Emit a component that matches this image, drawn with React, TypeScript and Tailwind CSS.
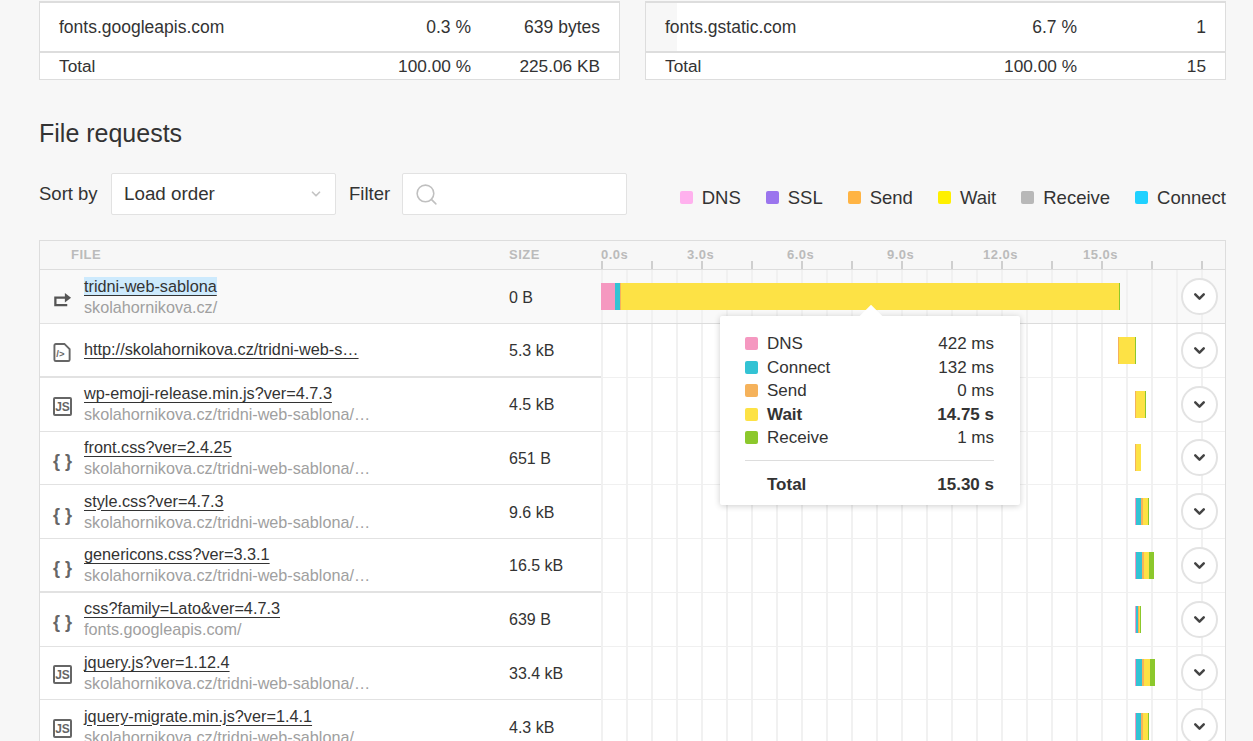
import { ChevronDown, Search } from 'lucide-react';

const colors = {
    dns: 'bg-[#f598c0]',
    connect: 'bg-[#33c3d4]',
    send: 'bg-[#f5b25b]',
    wait: 'bg-[#fde245]',
    receive: 'bg-[#8cc82c]',
};

type Kind = keyof typeof colors;

interface Request {
    icon: 'redirect' | 'html' | 'js' | 'css';
    name: string;
    host?: string;
    size: string;
    start: number;
    segments: [Kind, number][];
}

const site = 'skolahornikova.cz/tridni-web-sablona/…';

const requests: Request[] = [
    { icon: 'redirect', name: 'tridni-web-sablona', host: 'skolahornikova.cz/', size: '0 B', start: 0, segments: [['dns', 14], ['connect', 5], ['send', 1], ['wait', 498], ['receive', 1]] },
    { icon: 'html', name: 'http://skolahornikova.cz/tridni-web-s…', size: '5.3 kB', start: 517, segments: [['send', 1], ['wait', 16], ['receive', 1]] },
    { icon: 'js', name: 'wp-emoji-release.min.js?ver=4.7.3', host: site, size: '4.5 kB', start: 534, segments: [['send', 1], ['wait', 9], ['receive', 1]] },
    { icon: 'css', name: 'front.css?ver=2.4.25', host: site, size: '651 B', start: 534, segments: [['send', 1], ['wait', 5]] },
    { icon: 'css', name: 'style.css?ver=4.7.3', host: site, size: '9.6 kB', start: 534, segments: [['dns', 1], ['connect', 5], ['send', 2], ['wait', 5], ['receive', 1]] },
    { icon: 'css', name: 'genericons.css?ver=3.3.1', host: site, size: '16.5 kB', start: 534, segments: [['dns', 1], ['connect', 6], ['send', 2], ['wait', 5], ['receive', 5]] },
    { icon: 'css', name: 'css?family=Lato&ver=4.7.3', host: 'fonts.googleapis.com/', size: '639 B', start: 534, segments: [['dns', 1], ['connect', 2], ['send', 1], ['wait', 1], ['receive', 1]] },
    { icon: 'js', name: 'jquery.js?ver=1.12.4', host: site, size: '33.4 kB', start: 534, segments: [['dns', 1], ['connect', 6], ['send', 2], ['wait', 6], ['receive', 5]] },
    { icon: 'js', name: 'jquery-migrate.min.js?ver=1.4.1', host: site, size: '4.3 kB', start: 534, segments: [['dns', 1], ['connect', 5], ['send', 2], ['wait', 5], ['receive', 1]] },
];

const legend = [
    { label: 'DNS', color: 'bg-[#ffb1ee]' },
    { label: 'SSL', color: 'bg-[#9b75ee]' },
    { label: 'Send', color: 'bg-[#ffb444]' },
    { label: 'Wait', color: 'bg-[#fff000]' },
    { label: 'Receive', color: 'bg-[#b8b8b8]' },
    { label: 'Connect', color: 'bg-[#1fd1ff]' },
];

const timings: { label: string; value: string; kind: Kind; bold?: boolean }[] = [
    { label: 'DNS', value: '422 ms', kind: 'dns' },
    { label: 'Connect', value: '132 ms', kind: 'connect' },
    { label: 'Send', value: '0 ms', kind: 'send' },
    { label: 'Wait', value: '14.75 s', kind: 'wait', bold: true },
    { label: 'Receive', value: '1 ms', kind: 'receive' },
];

function FileIcon({ icon }: { icon: Request['icon'] }) {
    if (icon === 'redirect') {
        return (
            <svg width="20" height="16" viewBox="0 0 20 16" fill="none" stroke="#555" strokeWidth="2.4">
                <path d="M14 5.500H2.500v8H15" />
                <path d="M12.500 0.500l6.500 5-6.500 5z" fill="#555" stroke="none" />
            </svg>
        );
    }
    if (icon === 'html') {
        return (
            <svg width="20" height="21" viewBox="0 0 20 21" fill="none">
                <path d="M3 1.500h9l5.500 5.500v11a1.500 1.500 0 0 1-1.500 1.500H3A1.500 1.500 0 0 1 1.500 18V3A1.500 1.500 0 0 1 3 1.500z" stroke="#666" strokeWidth="2" />
                <text x="3.500" y="15" fontSize="10" fontWeight="700" fill="#666" fontFamily="'Liberation Sans', sans-serif">/&gt;</text>
            </svg>
        );
    }
    if (icon === 'js') {
        return (
            <div className="flex h-[19px] w-[19px] -translate-y-px items-end justify-center rounded-[2px] border-2 border-[#666] text-[12px] leading-[14px] font-bold text-[#666]">
                JS
            </div>
        );
    }
    return <span className="text-[18px] leading-[20px] font-bold whitespace-nowrap text-[#666]">{'{ }'}</span>;
}

function TotalsTable({ host, share, value, total, fill }: { host: string; share: string; value: string; total: string; fill: number }) {
    return (
        <div className="w-[581px] border-x border-b border-[#ddd] bg-white">
            <div className="relative flex h-[52px] items-center border-y-2 border-[#ddd] px-[19px] text-[17.500px]">
                <div className="absolute inset-y-0 left-0 bg-[#f7f7f7]" style={{ width: fill }} />
                <span className="relative flex-1">{host}</span>
                <span className="relative w-[120px] text-right">{share}</span>
                <span className="relative w-[129px] text-right">{value}</span>
            </div>
            <div className="flex h-[26px] items-center px-[19px] pt-px text-[17.250px]">
                <span className="flex-1">Total</span>
                <span className="w-[120px] text-right">100.00 %</span>
                <span className="w-[129px] text-right">{total}</span>
            </div>
        </div>
    );
}

function Row({ request, index }: { request: Request; index: number }) {
    const first = index === 0;
    const thick = index === 1 || index === 5;
    const width = request.segments.reduce((sum, s) => sum + s[1], 0);

    return (
        <div className={`flex h-[53.750px] ${first ? 'bg-[#f9f9f9]' : 'bg-white'}`}>
            <div className={`flex w-[561px] shrink-0 items-center border-[#e2e2e2] pr-4 pl-[13px] ${thick ? 'border-b-2' : 'border-b'}`}>
                <div className="flex w-[31px] shrink-0 translate-y-[3px] justify-center pr-3">
                    <FileIcon icon={request.icon} />
                </div>
                <div className="w-[425px] shrink-0 whitespace-nowrap">
                    <div className="text-[16.250px] leading-[21px]">
                        <span className={`underline decoration-[#333] underline-offset-[3px] ${first ? 'bg-[#cdeafd]' : ''}`}>{request.name}</span>
                    </div>
                    {request.host && <div className="text-[16.200px] leading-[21px] text-[#a0a0a0]">{request.host}</div>}
                </div>
                <span className="translate-y-[0.500px] text-[16px]">{request.size}</span>
            </div>
            <div className={`flex flex-1 items-center border-b bg-[repeating-linear-gradient(90deg,#f1f1f1_0,#f1f1f1_2px,transparent_2px,transparent_25px)] ${first ? 'border-[#dcdcdc]' : 'border-[#f0f0f0]'}`}>
                <div className="flex h-[27px] shrink-0" style={{ marginLeft: request.start, width }}>
                    {request.segments.map(([kind, w], i) => (
                        <div key={i} className={colors[kind]} style={{ width: w }} />
                    ))}
                </div>
                <button className="mr-[7px] ml-auto flex h-[37px] w-[37px] shrink-0 items-center justify-center rounded-full border-2 border-[#e3e3e3] bg-white text-[#444]">
                    <ChevronDown size={17} strokeWidth={3.500} />
                </button>
            </div>
        </div>
    );
}

export default function App() {
    return (
        <div className="h-[741px] overflow-hidden bg-[#f7f7f7] pt-px text-[#333] font-['Liberation_Sans',Arial,sans-serif]">
            <div className="flex justify-between pr-[27px] pl-[39px]">
                <TotalsTable host="fonts.googleapis.com" share="0.3 %" value="639 bytes" total="225.06 KB" fill={0} />
                <TotalsTable host="fonts.gstatic.com" share="6.7 %" value="1" total="15" fill={31} />
            </div>

            <h2 className="mt-[38px] pl-[39px] text-[25px] leading-[30px] font-normal">File requests</h2>

            <div className="mt-[25px] flex items-center pr-[27px] pl-[39px]">
                <span className="w-[72px] text-[18.500px]">Sort by</span>
                <div className="flex h-[42px] w-[225px] items-center justify-between rounded-[2px] border border-[#e2e2e2] bg-white px-[12px] text-[18.800px]">
                    Load order
                    <ChevronDown size={14} strokeWidth={3} className="text-[#c4c4c4]" />
                </div>
                <span className="ml-[13px] w-[53px] text-[18.500px]">Filter</span>
                <div className="flex h-[42px] w-[225px] items-center rounded-[2px] border border-[#e2e2e2] bg-white pl-[11px]">
                    <Search size={25} strokeWidth={1.500} className="text-[#c0c0c0]" />
                </div>
                <div className="mt-[7px] ml-auto flex items-center gap-[25px]">
                    {legend.map((item) => (
                        <div key={item.label} className="flex items-center gap-[9px] text-[18.500px] leading-[20px]">
                            <span className={`h-[13px] w-[13px] rounded-[2px] ${item.color}`} />
                            {item.label}
                        </div>
                    ))}
                </div>
            </div>

            <div className="relative mt-[25px] mr-[27px] ml-[39px] border-x border-t border-[#ddd]">
                <div className="flex h-[29.250px] border-b border-[#ddd] bg-[#f7f7f7] text-[13px] font-bold tracking-[0.5px] text-[#bbb]">
                    <div className="flex w-[561px] shrink-0 items-center">
                        <span className="ml-[31px] w-[438px]">FILE</span>
                        <span>SIZE</span>
                    </div>
                    <div className="relative flex-1">
                        <div className="absolute inset-x-0 bottom-0 h-[8px] bg-[repeating-linear-gradient(90deg,#cfcfcf_0,#cfcfcf_2px,transparent_2px,transparent_50px)]" />
                        <div className="flex pt-[7px] leading-[14px]">
                            <span className="w-[86px]">0.0s</span>
                            <span className="w-[100px]">3.0s</span>
                            <span className="w-[100px]">6.0s</span>
                            <span className="w-[96px]">9.0s</span>
                            <span className="w-[100px]">12.0s</span>
                            <span>15.0s</span>
                        </div>
                    </div>
                </div>

                {requests.map((request, index) => (
                    <Row key={request.name} request={request} index={index} />
                ))}

                <div className="absolute top-[75px] left-[680px] w-[300px] rounded-[2px] bg-white pt-[16px] pr-[26px] pl-[25px] text-[17px] shadow-[0_1px_6px_rgba(0,0,0,0.2)]">
                    <div className="absolute -top-[8px] left-[143px] h-[16px] w-[16px] rotate-45 bg-white" />
                    <div className="relative">
                        {timings.map((t) => (
                            <div key={t.label} className={`flex h-[23.500px] items-center ${t.bold ? 'font-bold' : ''}`}>
                                <span className={`mr-[9px] h-[13px] w-[13px] rounded-[2px] ${colors[t.kind]}`} />
                                <span className="flex-1">{t.label}</span>
                                <span>{t.value}</span>
                            </div>
                        ))}
                        <div className="mt-[10.500px] flex h-[45px] items-center border-t border-[#ddd] pt-[3px] pl-[22px] font-bold">
                            <span className="flex-1">Total</span>
                            <span>15.30 s</span>
                        </div>
                    </div>
                </div>
            </div>
        </div>
    );
}
